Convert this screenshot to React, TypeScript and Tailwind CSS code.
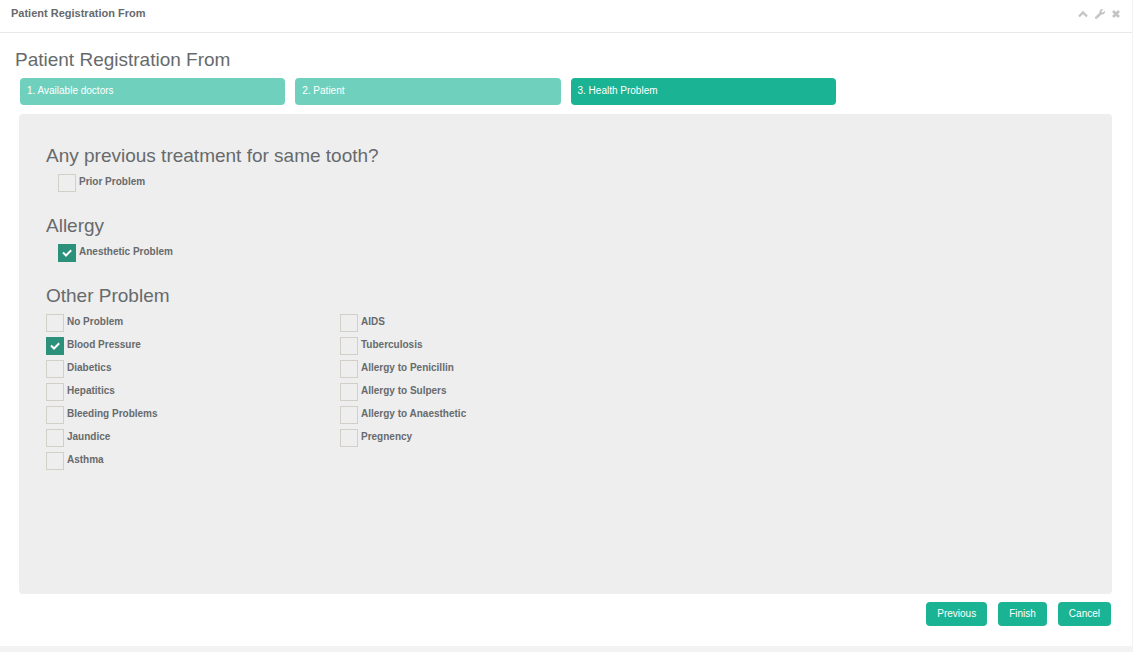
import { useState } from "react";
import { FaWrench } from "react-icons/fa";

type Option = { id: string; label: string; checked?: boolean };

const steps = ["1. Available doctors", "2. Patient", "3. Health Problem"];
const actions = ["Previous", "Finish", "Cancel"];

const firstColumn: Option[] = [
  { id: "none", label: "No Problem" },
  { id: "blood-pressure", label: "Blood Pressure", checked: true },
  { id: "diabetics", label: "Diabetics" },
  { id: "hepatitics", label: "Hepatitics" },
  { id: "bleeding", label: "Bleeding Problems" },
  { id: "jaundice", label: "Jaundice" },
  { id: "asthma", label: "Asthma" },
];

const secondColumn: Option[] = [
  { id: "aids", label: "AIDS" },
  { id: "tuberculosis", label: "Tuberculosis" },
  { id: "penicillin", label: "Allergy to Penicillin" },
  { id: "sulpers", label: "Allergy to Sulpers" },
  { id: "anaesthetic", label: "Allergy to Anaesthetic" },
  { id: "pregnency", label: "Pregnency" },
];

function CheckOption({ id, label, checked = false }: Option) {
  const [on, setOn] = useState(checked);
  return (
    <div className="flex h-[23px] items-start gap-[3px]">
      <span className="grid">
        <input
          id={id}
          type="checkbox"
          checked={on}
          onChange={() => setOn(!on)}
          className="col-start-1 row-start-1 size-[18px] appearance-none border border-[#d2d0c6] checked:border-[#2b917b] checked:bg-[#2b917b]"
        />
        {on && (
          <svg
            viewBox="0 0 18 18"
            className="pointer-events-none col-start-1 row-start-1 size-[18px]"
            fill="none"
            stroke="white"
            strokeWidth="2"
            aria-hidden="true"
          >
            <path d="M5 8.5 8 11.5 13.2 6.3" />
          </svg>
        )}
      </span>
      <label htmlFor={id} className="text-[10px] leading-4 font-bold">
        {label}
      </label>
    </div>
  );
}

function Heading({ children }: { children: string }) {
  return <h2 className="text-[19px] leading-6">{children}</h2>;
}

export default function App() {
  return (
    <div className="min-h-screen bg-[#f3f3f4] font-['Liberation_Sans',Arial,sans-serif] text-[#676a6c]">
      <section className="mr-px bg-white">
        <header className="flex h-[33px] items-start justify-between border-b border-[#e7eaec] pt-[5px] pr-3 pl-[11px]">
          <h5 className="text-[11px] leading-4 font-bold">Patient Registration From</h5>
          <div className="flex h-[18px] items-center gap-[7px] text-[#c4c4c4]">
            <button type="button" aria-label="Collapse">
              <svg
                viewBox="0 0 10 10"
                className="size-[10px]"
                fill="none"
                stroke="currentColor"
                strokeWidth="2.4"
              >
                <path d="M1 7.5 5 3.5 9 7.5" />
              </svg>
            </button>
            <button type="button" aria-label="Settings">
              <FaWrench size={10} />
            </button>
            <button type="button" aria-label="Close">
              <svg viewBox="0 0 8 8" className="size-2" stroke="currentColor" strokeWidth="2.8">
                <path d="M1 1 7 7M7 1 1 7" />
              </svg>
            </button>
          </div>
        </header>

        <div className="pt-[15px] pr-4 pb-5 pl-[15px]">
          <Heading>Patient Registration From</Heading>

          <nav className="mt-[6px] grid grid-cols-4">
            {steps.map((step, i) => (
              <a
                key={step}
                href="#step"
                aria-current={i === 2 ? "step" : undefined}
                className={`mx-[5px] h-[27px] rounded px-[7px] pt-[5px] text-[10px] leading-4 text-white ${
                  i === 2 ? "bg-[#1ab394]" : "bg-[#6fd1bd]"
                }`}
              >
                {step}
              </a>
            ))}
          </nav>

          <form onSubmit={(e) => e.preventDefault()}>
            <div className="mx-1 mt-[9px] min-h-[480px] rounded bg-[#eeeeee] px-[27px] pt-[30px]">
              <Heading>Any previous treatment for same tooth?</Heading>
              <div className="pt-[6px] pb-[17px] pl-3">
                <CheckOption id="prior" label="Prior Problem" />
              </div>
              <Heading>Allergy</Heading>
              <div className="pt-[6px] pb-[17px] pl-3">
                <CheckOption id="anesthetic" label="Anesthetic Problem" checked />
              </div>
              <Heading>Other Problem</Heading>
              <div className="flex pt-[6px]">
                <div className="w-[294px]">
                  {firstColumn.map((o) => (
                    <CheckOption key={o.id} {...o} />
                  ))}
                </div>
                <div>
                  {secondColumn.map((o) => (
                    <CheckOption key={o.id} {...o} />
                  ))}
                </div>
              </div>
            </div>

            <div className="mt-2 mr-[5px] flex justify-end gap-[11px]">
              {actions.map((action) => (
                <button
                  key={action}
                  type="button"
                  className="h-6 rounded bg-[#1ab394] px-[11px] text-[10px] leading-4 text-white"
                >
                  {action}
                </button>
              ))}
            </div>
          </form>
        </div>
      </section>
    </div>
  );
}
